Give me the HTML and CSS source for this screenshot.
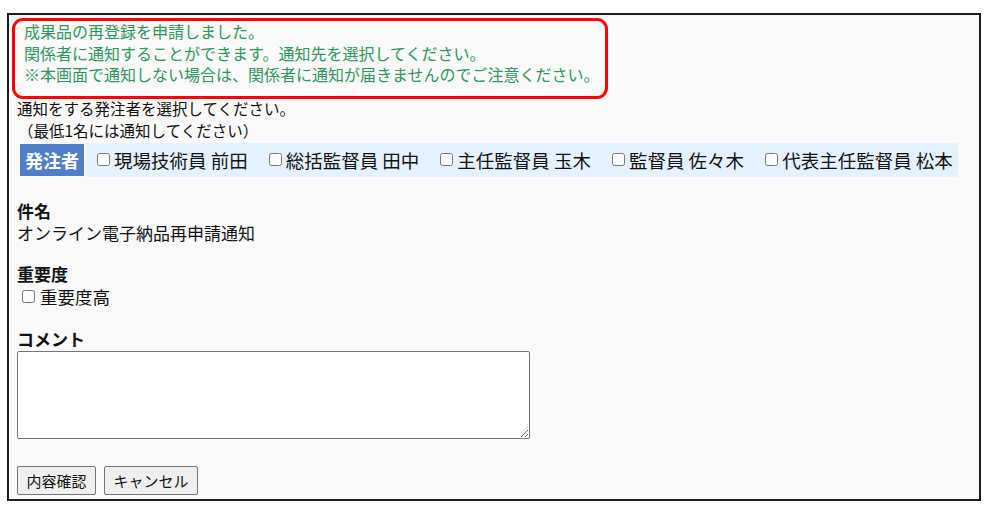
FILE: index.html
```html
<!DOCTYPE html>
<html lang="ja">
<head>
<meta charset="utf-8">
<link rel="stylesheet" href="styles.css">
</head>
<body>
<div class="frame">
  <div class="notice">
    <p>成果品の再登録を申請しました。</p>
    <p>関係者に通知することができます。通知先を選択してください。</p>
    <p>※本画面で通知しない場合は、関係者に通知が届きませんのでご注意ください。</p>
  </div>
  <div class="highlight"></div>
  <p class="lead">通知をする発注者を選択してください。</p>
  <p class="lead sub">（最低1名には通知してください）</p>
  <div class="row">
    <div class="row-head">発注者</div>
    <div class="row-body">
      <label class="opt"><input type="checkbox">現場技術員 前田</label>
      <label class="opt"><input type="checkbox">総括監督員 田中</label>
      <label class="opt"><input type="checkbox">主任監督員 玉木</label>
      <label class="opt"><input type="checkbox">監督員 佐々木</label>
      <label class="opt"><input type="checkbox">代表主任監督員 松本</label>
    </div>
  </div>
  <div class="field first">
    <div class="label">件名</div>
    <div class="value">オンライン電子納品再申請通知</div>
  </div>
  <div class="field">
    <div class="label">重要度</div>
    <label class="value opt check"><input type="checkbox">重要度高</label>
  </div>
  <div class="field">
    <div class="label">コメント</div>
    <textarea class="comment"></textarea>
  </div>
  <div class="buttons">
    <button class="btn btn-confirm">内容確認</button>
    <button class="btn btn-cancel">キャンセル</button>
  </div>
</div>
</body>
</html>
```

FILE: styles.css
```css
html, body {
  margin: 0;
  padding: 0;
  background: #ffffff;
}
body {
  font-family: "Noto Sans CJK JP", "Noto Sans", sans-serif;
  color: #111;
}
p { margin: 0; }
.frame {
  position: relative;
  box-sizing: border-box;
  margin: 13px 0 0 7px;
  width: 974px;
  height: 488px;
  border: 2px solid #1c1c1c;
  background: #f9f9f9;
  padding: 6px 0 0 8px;
}
.notice {
  padding-left: 7px;
  color: #2f9460;
  font-size: 16px;
  line-height: 21.5px;
}
.highlight {
  position: absolute;
  left: 3px;
  top: 3px;
  width: 596px;
  height: 81px;
  box-sizing: border-box;
  border: 3px solid #ff0000;
  border-radius: 11px;
}
.lead {
  margin-top: 11px;
  font-size: 15.5px;
  line-height: 22px;
}
.lead.sub {
  margin-top: 0;
  padding-left: 1px;
}
.row {
  display: flex;
  margin: 2px 0 0 3px;
  width: 938px;
  height: 34px;
  align-items: stretch;
}
.row-head {
  display: flex;
  align-items: center;
  justify-content: center;
  width: 64px;
  background: #4f7fc9;
  color: #fff;
  font-weight: bold;
  font-size: 18px;
  margin: 1px 2px 1px 0;
}
.row-body {
  flex: 1;
  display: flex;
  align-items: center;
  gap: 20px;
  background: #e5f1fe;
  padding-left: 10px;
  font-size: 18.5px;
}
.opt {
  display: inline-flex;
  align-items: center;
  white-space: nowrap;
}
.opt input {
  margin: 0 4px 0 1px;
  width: 13px;
  height: 13px;
}
.field {
  margin-top: 19px;
  font-size: 17px;
  line-height: 22px;
}
.field.first {
  margin-top: 23px;
}
.label {
  font-weight: bold;
}
.check {
  line-height: 24px;
  font-size: 17.5px;
}
.check input {
  margin-left: 5px;
  margin-right: 5px;
}
.comment {
  display: block;
  box-sizing: border-box;
  width: 513px;
  height: 88px;
  margin: 1px 0 0 0;
  border: 1px solid #767676;
  border-radius: 2px;
  background: #fff;
}
.buttons {
  display: flex;
  gap: 8px;
  margin-top: 27px;
}
.btn {
  font-family: "Noto Sans CJK JP", sans-serif;
  font-size: 15px;
  height: 29px;
  padding: 0;
  background: #efefef;
  border: 1px solid #767676;
  border-radius: 2px;
  color: #111;
}
.btn-confirm { width: 79px; }
.btn-cancel { width: 94px; }
```
